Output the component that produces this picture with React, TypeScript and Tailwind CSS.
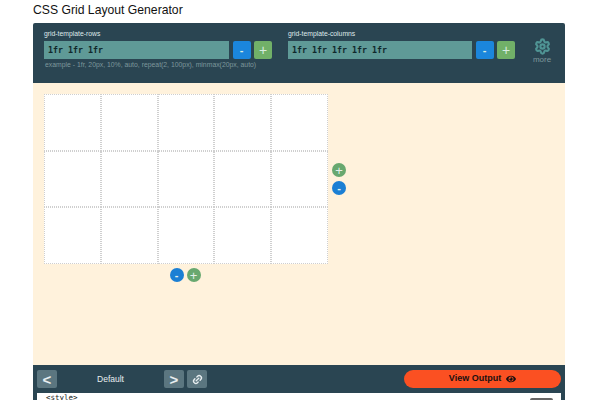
import React from "react";
import { Link2, Settings } from "lucide-react";
import { FaEye } from "react-icons/fa";

const cells = Array.from({ length: 15 });

function SquareButton({ label, color }: { label: string; color: "blue" | "green" }) {
  return (
    <button
      className={`w-[18px] h-[18px] rounded-[2px] leading-none text-[#d8ece0] flex items-center justify-center ${
        color === "blue" ? "bg-[#1b86dc] text-[11px] font-bold" : "bg-[#71b068] text-[14px]"
      }`}
    >
      {label}
    </button>
  );
}

function RoundButton({ label, color }: { label: string; color: "blue" | "green" }) {
  return (
    <button
      className={`w-[14px] h-[14px] rounded-full leading-none text-[#e4f0ea] flex items-center justify-center ${
        color === "blue" ? "bg-[#1b7fd4] text-[11px] font-bold" : "bg-[#68a86f] text-[13px]"
      }`}
    >
      {label}
    </button>
  );
}

function TrackInput({ label, value, width }: { label: string; value: string; width: string }) {
  return (
    <div>
      <p className="text-[6.8px] leading-[10px] text-[#dfe8ea] mb-[2px] h-[10px]">{label}</p>
      <div className="flex gap-[3.5px]">
        <div
          className={`${width} h-[18px] bg-[#5f9a97] pl-[4px] flex items-center text-[8.3px] font-bold text-[#10282c] font-['DejaVu_Sans_Mono',monospace]`}
        >
          {value}
        </div>
        <SquareButton label="-" color="blue" />
        <SquareButton label="+" color="green" />
      </div>
    </div>
  );
}

function BarButton({ children }: { children: React.ReactNode }) {
  return (
    <button className="w-[20px] h-[18px] rounded-[2px] bg-[#5b7680] text-[#e8eef0] flex items-center justify-center">
      {children}
    </button>
  );
}

export default function App() {
  return (
    <div className="w-[600px] h-[400px] overflow-hidden bg-white pl-[33px] pr-[35px] font-['Liberation_Sans',sans-serif]">
      <h1 className="h-[23px] pt-[2px] text-[12.2px] leading-[17px] text-[#111]">CSS Grid Layout Generator</h1>

      {/* top controls */}
      <div className="h-[60px] bg-[#2a4552] rounded-t-[2px] pl-[11px] pt-[6px] flex">
        <div className="w-[244px]">
          <TrackInput label="grid-template-rows" value="1fr 1fr 1fr" width="w-[185px]" />
          <p className="text-[6.85px] leading-[10px] mt-[1px] pl-[1px] text-[#7d979c]">
            example - 1fr, 20px, 10%, auto, repeat(2, 100px), minmax(20px, auto)
          </p>
        </div>
        <TrackInput label="grid-template-columns" value="1fr 1fr 1fr 1fr 1fr" width="w-[184px]" />
        <div className="ml-[18px] w-[18px] flex flex-col items-center pt-[9px] text-[#4f9494]">
          <Settings className="w-[17px] h-[17px] shrink-0" strokeWidth={3} />
          <span className="text-[8px] leading-[10px] text-[#7d979c]">more</span>
        </div>
      </div>

      {/* grid preview */}
      <div className="h-[282px] bg-[#fff2dc] pl-[11px] pt-[11px]">
        <div className="flex items-center">
          <div className="w-[284px] h-[170px] grid grid-cols-5 grid-rows-3 bg-white">
            {cells.map((_, i) => (
              <div key={i} className="border border-dotted border-[#cfcfcf]" />
            ))}
          </div>
          <div className="flex flex-col gap-[4px] ml-[4px]">
            <RoundButton label="+" color="green" />
            <RoundButton label="-" color="blue" />
          </div>
        </div>
        <div className="flex gap-[3px] w-[282px] justify-center mt-[4px]">
          <RoundButton label="-" color="blue" />
          <RoundButton label="+" color="green" />
        </div>
      </div>

      {/* bottom bar */}
      <div className="h-[35px] bg-[#2a4552] px-[4px] pt-[5px]">
        <div className="flex items-start">
          <BarButton>
            <span className="text-[15px] leading-none font-bold">&lt;</span>
          </BarButton>
          <span className="w-[107px] h-[18px] text-center text-[8.5px] leading-[18px] text-[#e8eef0]">Default</span>
          <BarButton>
            <span className="text-[15px] leading-none font-bold">&gt;</span>
          </BarButton>
          <div className="ml-[3px]">
            <BarButton>
              <Link2 className="w-[11px] h-[11px] -rotate-45" strokeWidth={3} />
            </BarButton>
          </div>
          <button className="ml-[197px] w-[157px] h-[18px] rounded-full bg-[#fb5022] text-[#1a1010] text-[9px] font-bold flex items-center justify-center gap-[5px]">
            View Output
            <FaEye className="w-[10px] h-[10px]" />
          </button>
        </div>
        <div className="relative mt-[5px] bg-white h-[10px] pl-[9px] text-[7.5px] leading-[10px] font-['DejaVu_Sans_Mono',monospace] text-[#222]">
          &lt;style&gt;
          <span className="absolute right-[8px] top-[5px] w-[23px] h-[6px] bg-[#666] rounded-t-[2px]" />
        </div>
      </div>
    </div>
  );
}
